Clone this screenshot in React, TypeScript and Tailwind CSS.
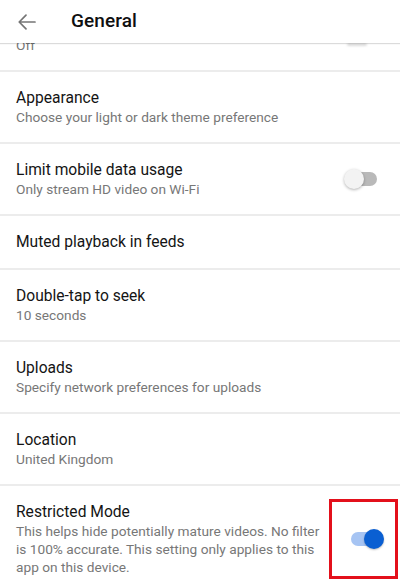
import React from "react";

type Row = {
    title: string;
    subtitle?: string;
    toggle?: "on" | "off";
    flagged?: boolean;
};

const rows: Row[] = [
    { title: "Appearance", subtitle: "Choose your light or dark theme preference" },
    { title: "Limit mobile data usage", subtitle: "Only stream HD video on Wi-Fi", toggle: "off" },
    { title: "Muted playback in feeds" },
    { title: "Double-tap to seek", subtitle: "10 seconds" },
    { title: "Uploads", subtitle: "Specify network preferences for uploads" },
    { title: "Location", subtitle: "United Kingdom" },
    {
        title: "Restricted Mode",
        subtitle:
            "This helps hide potentially mature videos. No filter is 100% accurate. This setting only applies to this app on this device.",
        toggle: "on",
        flagged: true,
    },
];

function Toggle({ on }: { on: boolean }) {
    return (
        <div className="relative w-[36px] h-[20px] shrink-0">
            <div
                className={`absolute left-[3px] top-[3px] w-[30px] h-[14px] rounded-full ${on ? "bg-[#a6c4f3]" : "bg-[#b9b9b9]"
                    }`}
            />
            <div
                className={`absolute top-0 w-[20px] h-[20px] rounded-full ${on
                    ? "right-0 bg-[#0a5fd2] shadow-[0_1px_2px_rgba(0,0,0,0.25)]"
                    : "left-0 bg-[#f3f3f3] shadow-[0_1px_3px_rgba(0,0,0,0.3)]"
                    }`}
            />
        </div>
    );
}

function Divider() {
    return <div className="h-[2px] bg-[#ececec]" />;
}

export default function App() {
    return (
        <div className="w-[400px] h-[579px] overflow-hidden bg-white font-['Roboto',sans-serif]">
            {/* Header */}
            <div className="relative z-10 h-[43px] flex items-center bg-white shadow-[0_1px_1px_rgba(0,0,0,0.14)]">
                <svg width="20" height="18" viewBox="0 0 20 18" fill="none" className="ml-[17px]">
                    <path d="M18 9H2.5M9 2.2L2.2 9L9 15.8" stroke="#757575" strokeWidth="1.7" strokeLinecap="round" strokeLinejoin="round" />
                </svg>
                <span className="ml-[34px] text-[19px] font-medium text-[#0f0f0f] tracking-[0.1px]">General</span>
            </div>

            {/* Tail of the row above, scrolled under the header */}
            <div className="h-[27px] overflow-hidden flex items-end justify-between pl-[16px] pb-[16px]">
                <span className="text-[13.7px] leading-[18px] text-[#777]">Off</span>
                <div className="self-start w-[20px] h-[3px] mr-[33px] rounded-full bg-[#dcdcdc] blur-[1px]" />
            </div>
            <Divider />

            {rows.map((row) => (
                <div key={row.title}>
                    <div className="flex items-center pl-[16px]">
                        <div className={`flex-1 ${row.flagged ? "py-[16px] pr-[4px]" : "py-[16px] pr-[16px]"}`}>
                            <div className="text-[15.6px] leading-[20px] text-[#141414]">{row.title}</div>
                            {row.subtitle && (
                                <div className="text-[13.7px] leading-[18px] text-[#777]">{row.subtitle}</div>
                            )}
                        </div>
                        {row.toggle && !row.flagged && (
                            <div className="mr-[20px]">
                                <Toggle on={row.toggle === "on"} />
                            </div>
                        )}
                        {row.flagged && (
                            <div className="w-[69px] h-[80px] mr-[2px] border-[3px] border-[#e3101b] flex items-center justify-end pr-[11px]">
                                <Toggle on={row.toggle === "on"} />
                            </div>
                        )}
                    </div>
                    {!row.flagged && <Divider />}
                </div>
            ))}
        </div>
    );
}
